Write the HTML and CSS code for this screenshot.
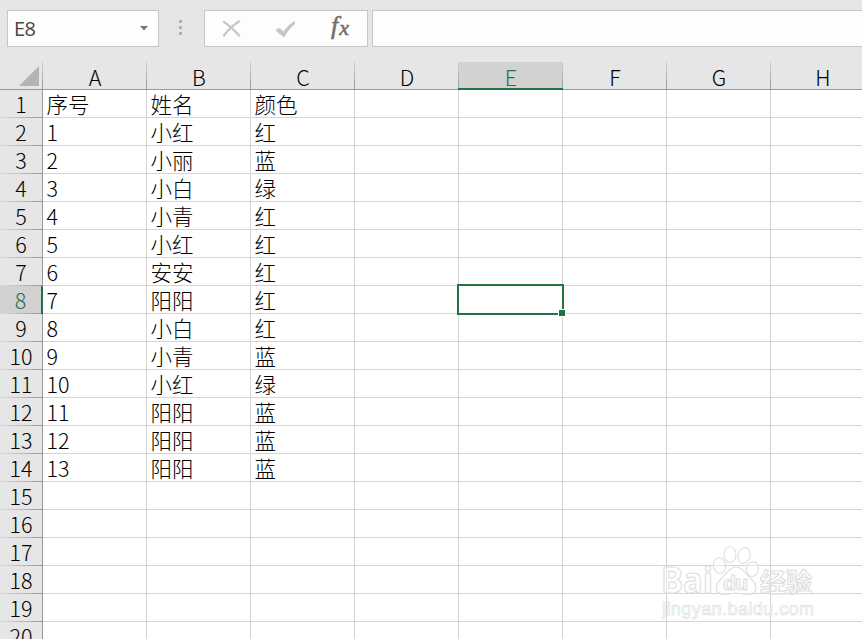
FILE: index.html
```
<!DOCTYPE html>
<html lang="zh-CN">
    <head>
        <meta charset="utf-8">
        <title>Sheet1</title>
        <link rel="stylesheet" href="styles.css">
    </head>
    <body>
        <div class="formula-bar">
            <div class="name-box">
                <span>E8</span>
                <svg class="arrow" width="8" height="5" viewBox="0 0 8 5"><path d="M0 0H8L4 4.5Z" fill="#777"/></svg>
            </div>
            <div class="dots"><i></i><i></i><i></i></div>
            <div class="buttons">
                <svg width="19" height="18" viewBox="0 0 19 18"><path d="M2 2C7 5 12 10 17 15.500M17 1.500C11 5 6 10 2 15.500" fill="none" stroke="#c6c6c6" stroke-width="2.200" stroke-linecap="round"/></svg>
                <svg width="20" height="18" viewBox="0 0 20 18"><path d="M0.500 9L4 8L7.500 11.500C10.500 7 14 3.500 19 1V4C15 7 11.500 11.500 8.500 17H7.500L0.500 11.500Z" fill="#c6c6c6"/></svg>
                <span class="fx"><span>f</span><span class="x">x</span></span>
            </div>
            <div class="formula-input"></div>
        </div>

        <div class="sheet">
            <table>
                <thead>
                    <tr><th class="corner"><svg width="20" height="20" viewBox="0 0 20 20"><path d="M20 0V20H0Z" fill="#b4b4b4"/></svg></th><th>A</th><th>B</th><th>C</th><th>D</th><th class="active">E</th><th>F</th><th>G</th><th>H</th></tr>
                </thead>
                <tbody>
                    <tr><th>1</th><td>序号</td><td>姓名</td><td>颜色</td><td></td><td></td><td></td><td></td><td></td></tr>
                    <tr><th>2</th><td>1</td><td>小红</td><td>红</td><td></td><td></td><td></td><td></td><td></td></tr>
                    <tr><th>3</th><td>2</td><td>小丽</td><td>蓝</td><td></td><td></td><td></td><td></td><td></td></tr>
                    <tr><th>4</th><td>3</td><td>小白</td><td>绿</td><td></td><td></td><td></td><td></td><td></td></tr>
                    <tr><th>5</th><td>4</td><td>小青</td><td>红</td><td></td><td></td><td></td><td></td><td></td></tr>
                    <tr><th>6</th><td>5</td><td>小红</td><td>红</td><td></td><td></td><td></td><td></td><td></td></tr>
                    <tr><th>7</th><td>6</td><td>安安</td><td>红</td><td></td><td></td><td></td><td></td><td></td></tr>
                    <tr><th class="active">8</th><td>7</td><td>阳阳</td><td>红</td><td></td><td class="selected"><div class="cursor"></div></td><td></td><td></td><td></td></tr>
                    <tr><th>9</th><td>8</td><td>小白</td><td>红</td><td></td><td></td><td></td><td></td><td></td></tr>
                    <tr><th>10</th><td>9</td><td>小青</td><td>蓝</td><td></td><td></td><td></td><td></td><td></td></tr>
                    <tr><th>11</th><td>10</td><td>小红</td><td>绿</td><td></td><td></td><td></td><td></td><td></td></tr>
                    <tr><th>12</th><td>11</td><td>阳阳</td><td>蓝</td><td></td><td></td><td></td><td></td><td></td></tr>
                    <tr><th>13</th><td>12</td><td>阳阳</td><td>蓝</td><td></td><td></td><td></td><td></td><td></td></tr>
                    <tr><th>14</th><td>13</td><td>阳阳</td><td>蓝</td><td></td><td></td><td></td><td></td><td></td></tr>
                    <tr><th>15</th><td></td><td></td><td></td><td></td><td></td><td></td><td></td><td></td></tr>
                    <tr><th>16</th><td></td><td></td><td></td><td></td><td></td><td></td><td></td><td></td></tr>
                    <tr><th>17</th><td></td><td></td><td></td><td></td><td></td><td></td><td></td><td></td></tr>
                    <tr><th>18</th><td></td><td></td><td></td><td></td><td></td><td></td><td></td><td></td></tr>
                    <tr><th>19</th><td></td><td></td><td></td><td></td><td></td><td></td><td></td><td></td></tr>
                    <tr><th>20</th><td></td><td></td><td></td><td></td><td></td><td></td><td></td><td></td></tr>
                </tbody>
            </table>
        </div>

        <svg class="watermark" width="160" height="80" viewBox="0 0 160 80">
            <g class="outline">
                <text class="logo" x="1" y="53" textLength="52" lengthAdjust="spacingAndGlyphs">Bai</text>
                <ellipse cx="59.500" cy="25.500" rx="6" ry="8" transform="rotate(-8 59.500 25.500)"/>
                <ellipse cx="70" cy="14.500" rx="6" ry="8"/>
                <ellipse cx="84" cy="15.500" rx="6" ry="8" transform="rotate(12 84 15.500)"/>
                <ellipse cx="92.500" cy="29" rx="6" ry="7.500" transform="rotate(12 92.500 29)"/>
                <path d="M76 27C69 27 67 34 61 39C54 45 55 54 64 54.500C70 55 72 53 76 53C80 53 83 55 88 54.500C98 54 98 45 91 39C85 34 83 27 76 27Z"/>
                <text class="du" x="63" y="50" textLength="25">du</text>
                <text class="cn" x="100" y="52" textLength="52">经验</text>
                <text class="url" x="2" y="75" textLength="152">jingyan.baidu.com</text>
            </g>
        </svg>
    </body>
</html>
```
FILE: styles.css
```
body {
    margin: 0;
    height: 639px;
    overflow: hidden;
    position: relative;
    background-color: #e6e6e6;
    font-family: "Noto Sans CJK SC", sans-serif;
    font-weight: 300;
    color: #000;
}
.formula-bar {
    display: flex;
    height: 37px;
    padding: 10px 0 15px 7px;
}
.name-box, .buttons, .formula-input {
    box-sizing: border-box;
    border: 1px solid #c6c6c6;
    background-color: #fdfdfd;
}
.name-box {
    width: 152px;
    padding: 0 10px 0 6px;
    display: flex;
    align-items: center;
    justify-content: space-between;
    font-family: "Open Sans", sans-serif;
    font-weight: 400;
    font-size: 20px;
    letter-spacing: -0.5px;
    color: #444;
}
.dots {
    width: 43px;
    margin-right: 2px;
    display: flex;
    flex-direction: column;
    align-items: center;
    justify-content: center;
    gap: 3px;
    padding-bottom: 2px;
    box-sizing: border-box;
}
.dots i {
    width: 3px;
    height: 3px;
    background-color: #b0b0b0;
}
.buttons {
    width: 164px;
    display: flex;
    align-items: center;
    padding-left: 17px;
    gap: 35px;
}
.fx {
    font-family: "Liberation Serif", serif;
    font-style: italic;
    font-weight: 400;
    font-size: 26px;
    line-height: 30px;
    color: #707070;
    -webkit-text-stroke: 0.6px #707070;
    display: flex;
    padding-bottom: 4px;
}
.fx .x {
    font-size: 22px;
    padding: 2px 0 0 1px;
}
.formula-input {
    flex: 1;
    margin-left: 4px;
    border-right: none;
}
.sheet {
    height: 577px;
    overflow: hidden;
}
table {
    table-layout: fixed;
    width: 875px;
    border-spacing: 0;
    background-color: #fff;
}
th, td {
    box-sizing: border-box;
    width: 104px;
    height: 28px;
    padding: 0;
    font-size: 21.5px;
    font-weight: 300;
    line-height: 27px;
    white-space: nowrap;
}
td {
    border-right: 1px solid #d4d4d4;
    border-bottom: 1px solid #d4d4d4;
    padding-left: 3.5px;
}
thead th {
    border-bottom: 1px solid #999;
    padding-top: 2px;
    line-height: 25px;
    background: linear-gradient(#d0d0d0, #999) right / 1px 100% no-repeat #e6e6e6;
}
thead th.active {
    position: relative;
    background-color: #d2d2d2;
    color: #217346;
}
thead th.active::after {
    content: "";
    position: absolute;
    left: -1px;
    right: 0;
    bottom: -1px;
    height: 2px;
    background-color: #217346;
}
thead th.corner {
    width: 43px;
    padding: 0 4px 0 0;
}
.corner svg {
    display: block;
    margin: 1px 0 0 auto;
}
tbody th {
    border-right: 1px solid #999;
    padding-bottom: 1px;
    background: linear-gradient(to right, #dcdcdc, #999) bottom / 100% 1px no-repeat #e6e6e6;
}
tbody th.active {
    background-color: #d2d2d2;
    border-right: 2px solid #217346;
    color: #217346;
}
.selected {
    position: relative;
}
.cursor {
    position: absolute;
    top: -2px;
    left: -2px;
    width: 103px;
    height: 27px;
    border: 2px solid #217346;
}
.cursor::after {
    content: "";
    position: absolute;
    right: -4px;
    bottom: -4px;
    width: 6px;
    height: 6px;
    background-color: #217346;
    border: 1px solid #fff;
}
.watermark {
    position: absolute;
    left: 660px;
    top: 540px;
}
.outline {
    fill: rgba(255, 255, 255, 0.4);
    stroke: #e0e0e0;
    stroke-width: 1.2;
}
.logo {
    font: 700 36px "Open Sans", sans-serif;
}
.du {
    font: 700 21px "Liberation Sans", sans-serif;
}
.cn {
    font: 700 26px "Noto Sans CJK SC", sans-serif;
}
.url {
    font: 400 18px "Liberation Sans", sans-serif;
    stroke-width: 0.7;
}
```
